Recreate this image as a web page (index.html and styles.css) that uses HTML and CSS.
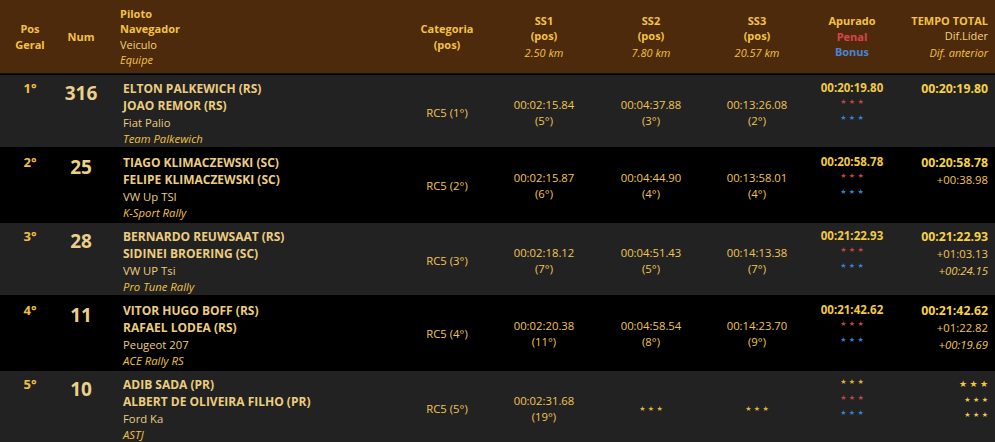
FILE: index.html
```html
<!DOCTYPE html>
<html lang="pt">
<head>
<meta charset="utf-8">
<link rel="stylesheet" href="styles.css">
</head>
<body>
<div class="board">
  <div class="row head">
    <div class="c hpos"><b>Pos<br>Geral</b></div>
    <div class="c hnum"><b>Num</b></div>
    <div class="c hpil"><b>Piloto</b><b>Navegador</b><span class="veh">Veiculo</span><i>Equipe</i></div>
    <div class="c hcen"><b>Categoria</b><b>(pos)</b></div>
    <div class="c hcen"><b>SS1</b><b>(pos)</b><i>2.50 km</i></div>
    <div class="c hcen"><b>SS2</b><b>(pos)</b><i>7.80 km</i></div>
    <div class="c hcen"><b>SS3</b><b>(pos)</b><i>20.57 km</i></div>
    <div class="c hcen"><b>Apurado</b><b class="red">Penal</b><b class="blue">Bonus</b></div>
    <div class="c htot"><b>TEMPO TOTAL</b><span class="veh">Dif.Líder</span><i>Dif. anterior</i></div>
  </div>

  <div class="row odd">
    <div class="c pos"><b>1°</b></div>
    <div class="c num"><b>316</b></div>
    <div class="c pil"><b>ELTON PALKEWICH (RS)</b><b>JOAO REMOR (RS)</b><span>Fiat Palio</span><i>Team Palkewich</i></div>
    <div class="c cat">RC5 (1°)</div>
    <div class="c ss"><span>00:02:15.84</span><span>(5°)</span></div>
    <div class="c ss"><span>00:04:37.88</span><span>(3°)</span></div>
    <div class="c ss"><span>00:13:26.08</span><span>(2°)</span></div>
    <div class="c apu"><b>00:20:19.80</b><span class="st sred">★★★</span><span class="st sblue">★★★</span></div>
    <div class="c tot"><b>00:20:19.80</b></div>
  </div>

  <div class="row even">
    <div class="c pos"><b>2°</b></div>
    <div class="c num"><b>25</b></div>
    <div class="c pil"><b>TIAGO KLIMACZEWSKI (SC)</b><b>FELIPE KLIMACZEWSKI (SC)</b><span>VW Up TSI</span><i>K-Sport Rally</i></div>
    <div class="c cat">RC5 (2°)</div>
    <div class="c ss"><span>00:02:15.87</span><span>(6°)</span></div>
    <div class="c ss"><span>00:04:44.90</span><span>(4°)</span></div>
    <div class="c ss"><span>00:13:58.01</span><span>(4°)</span></div>
    <div class="c apu"><b>00:20:58.78</b><span class="st sred">★★★</span><span class="st sblue">★★★</span></div>
    <div class="c tot"><b>00:20:58.78</b><span>+00:38.98</span></div>
  </div>

  <div class="row odd">
    <div class="c pos"><b>3°</b></div>
    <div class="c num"><b>28</b></div>
    <div class="c pil"><b>BERNARDO REUWSAAT (RS)</b><b>SIDINEI BROERING (SC)</b><span>VW UP Tsi</span><i>Pro Tune Rally</i></div>
    <div class="c cat">RC5 (3°)</div>
    <div class="c ss"><span>00:02:18.12</span><span>(7°)</span></div>
    <div class="c ss"><span>00:04:51.43</span><span>(5°)</span></div>
    <div class="c ss"><span>00:14:13.38</span><span>(7°)</span></div>
    <div class="c apu"><b>00:21:22.93</b><span class="st sred">★★★</span><span class="st sblue">★★★</span></div>
    <div class="c tot"><b>00:21:22.93</b><span>+01:03.13</span><i>+00:24.15</i></div>
  </div>

  <div class="row even">
    <div class="c pos"><b>4°</b></div>
    <div class="c num"><b>11</b></div>
    <div class="c pil"><b>VITOR HUGO BOFF (RS)</b><b>RAFAEL LODEA (RS)</b><span>Peugeot 207</span><i>ACE Rally RS</i></div>
    <div class="c cat">RC5 (4°)</div>
    <div class="c ss"><span>00:02:20.38</span><span>(11°)</span></div>
    <div class="c ss"><span>00:04:58.54</span><span>(8°)</span></div>
    <div class="c ss"><span>00:14:23.70</span><span>(9°)</span></div>
    <div class="c apu"><b>00:21:42.62</b><span class="st sred">★★★</span><span class="st sblue">★★★</span></div>
    <div class="c tot"><b>00:21:42.62</b><span>+01:22.82</span><i>+00:19.69</i></div>
  </div>

  <div class="row odd">
    <div class="c pos"><b>5°</b></div>
    <div class="c num"><b>10</b></div>
    <div class="c pil"><b>ADIB SADA (PR)</b><b>ALBERT DE OLIVEIRA FILHO (PR)</b><span>Ford Ka</span><i>ASTJ</i></div>
    <div class="c cat">RC5 (5°)</div>
    <div class="c ss"><span>00:02:31.68</span><span>(19°)</span></div>
    <div class="c ss"><span class="st sgold">★★★</span></div>
    <div class="c ss"><span class="st sgold">★★★</span></div>
    <div class="c apu"><span class="st sgold first">★★★</span><span class="st sred">★★★</span><span class="st sblue">★★★</span></div>
    <div class="c tot"><span class="st sgold big">★★★</span><span class="st sgold">★★★</span><span class="st sgold">★★★</span></div>
  </div>
</div>
</body>
</html>
```

FILE: styles.css
```css
* { box-sizing: border-box; margin: 0; padding: 0; }
html, body { background: #000; }
body {
  width: 995px;
  height: 442px;
  overflow: hidden;
  font-family: "Open Sans", "DejaVu Sans", sans-serif;
  font-size: 11.3px;
  color: #f0c24a;
}
.board { display: flex; flex-direction: column; }
.row {
  display: grid;
  grid-template-columns: 60px 42px 293px 104px 90px 124px 88px 102px 92px;
  height: 74px;
}
.row.head { background: #4e2a0d; border-bottom: 1px solid #111; color: #f3c246; font-size: 11px; }
.row.odd { background: #222222; border-top: 1px solid #000; border-bottom: 1px solid #000; }
.row.even { background: #000; }
.c { display: flex; flex-direction: column; }
.c > * { display: block; font-style: normal; white-space: nowrap; }
.c i { font-style: italic; }

/* header */
.head .c { justify-content: center; line-height: 15.5px; align-items: center; text-align: center; }
.head .hpil { align-items: flex-start; padding-left: 18px; }
.head .htot { align-items: flex-end; padding-right: 7px; text-align: right; }
.head .veh { color: #f4d27c; }
.head .hcen i { font-weight: normal; padding-top: 1px; }
.head .htot i { padding-top: 1px; }
.head .red { color: #d8454d; }
.head .blue { color: #4a84d4; }

/* body rows */
.odd .c { padding-top: 6px; }
.even .c { padding-top: 7px; }
.pos { align-items: center; }
.pos b { font-size: 13px; line-height: 17px; color: #f0c040; margin-top: -1px; }
.num { align-items: center; }
.num b { font-size: 19px; line-height: 26px; color: #ead08a; margin-top: -1px; }
.pil { padding-left: 21px; line-height: 16.8px; color: #ebcd80; }
.pil b { font-size: 12px; }
.pil i { color: #f0c343; }
.row .cat, .row .ss {
  padding-top: 2px; justify-content: center; align-items: center; line-height: 16px; color: #f1c553;
}
.apu { align-items: center; line-height: 15.5px; }
.apu b { color: #f2c944; line-height: 14px; font-size: 11.5px; }
.tot { align-items: flex-end; padding-right: 7px; line-height: 16.8px; }
.tot b { font-size: 12.3px; color: #f6d244; }
.tot span, .tot i { color: #f0c656; }

.st { font-family: "DejaVu Sans", sans-serif; font-size: 7px; letter-spacing: 2.4px; margin-right: -2.4px; }
.sred { color: #c4444c; }
.sblue { color: #3d7fcf; }
.sgold { color: #e0b440; }
.apu .first { line-height: 15.5px; margin-top: -2px; }
.tot .big { font-size: 9px; line-height: 17px; color: #f2cb3a; }
.tot .st { line-height: 15.5px; }
```
